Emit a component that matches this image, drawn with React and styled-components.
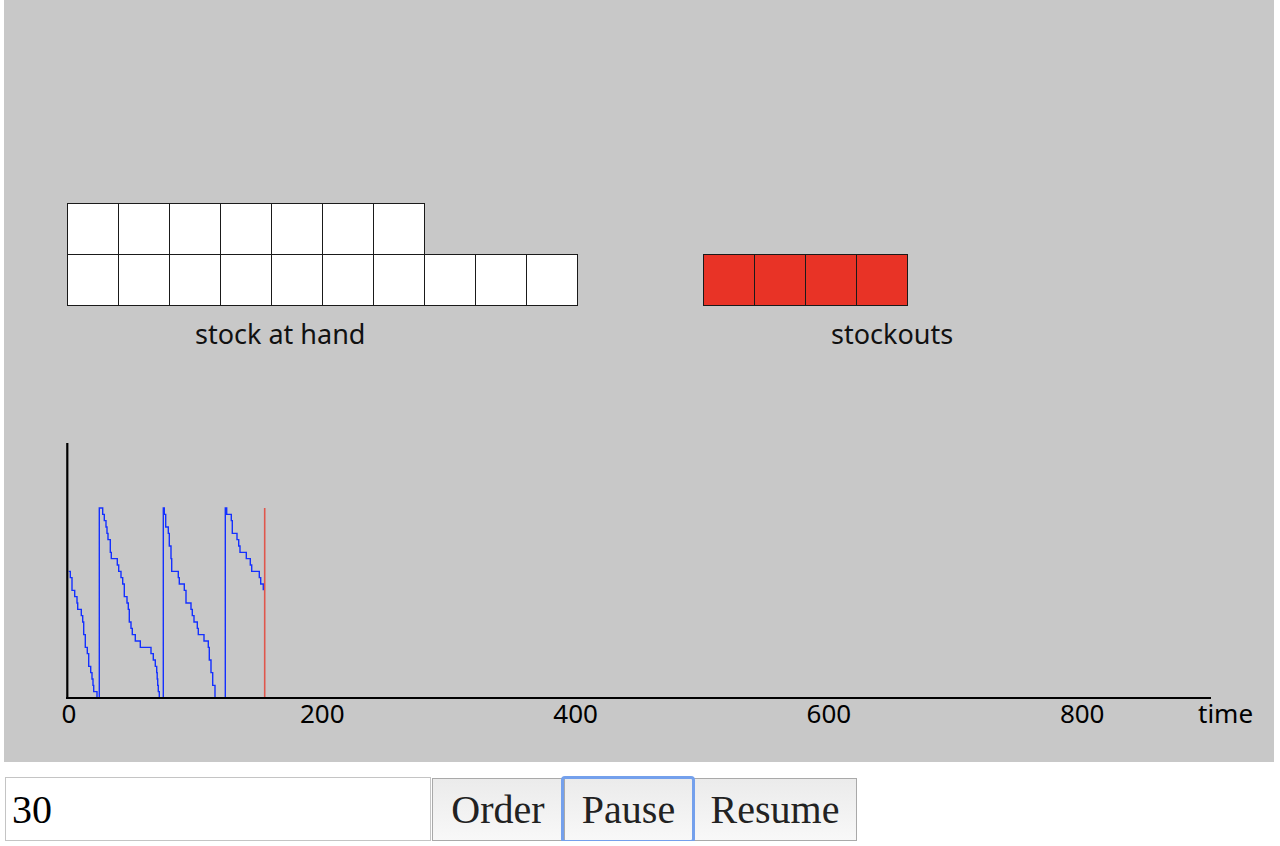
import { createGlobalStyle, styled } from 'styled-components';

const GlobalStyle = createGlobalStyle`
    html, body {
        margin: 0;
        padding: 0;
        background: #ffffff;
    }
    #root {
        padding-left: 4px;
    }
`;

const Panel = styled.div`
    width: 1270px;
    height: 762px;
    background: #c8c8c8;
    display: flex;
    flex-direction: column;
`;

const StockArea = styled.div`
    display: grid;
    grid-template-columns: 636px 636px;
    padding: 203px 0 0 63px;
`;

const StockGroup = styled.div`
    display: flex;
    flex-direction: column;
`;

const Stack = styled.div`
    height: 102px;
    display: flex;
    flex-direction: column;
    justify-content: flex-end;
`;

const SquareRow = styled.div`
    display: flex;
`;

const Square = styled.div`
    box-sizing: border-box;
    width: 52px;
    height: 52px;
    margin: 0 -1px -1px 0;
    border: 1px solid #1a1a1a;
    background: ${(props) => props.color};
`;

const GroupLabel = styled.div`
    margin-top: 11px;
    padding-left: 128px;
    height: 35px;
    line-height: 35px;
    font-family: 'Noto Sans', sans-serif;
    font-size: 27px;
    color: #111111;
`;

const Chart = styled.svg`
    display: block;
    width: 1270px;
    height: 411px;
    font-family: 'Noto Sans', sans-serif;
    font-size: 26px;
`;

const Controls = styled.div`
    display: flex;
    align-items: center;
    margin-top: 15px;
`;

const AmountInput = styled.input`
    box-sizing: border-box;
    width: 426px;
    height: 64px;
    margin: 0 1px 0 1px;
    padding: 0 6px;
    border: 1px solid #c4c4c4;
    font-family: 'Liberation Serif', serif;
    font-size: 40px;
    color: #000000;
    outline: none;
`;

const Button = styled.button`
    position: relative;
    z-index: ${(props) => (props.focused ? 1 : 0)};
    box-sizing: border-box;
    width: ${(props) => props.width}px;
    height: 63px;
    padding: 0;
    border: 1px solid #a9a9a9;
    background: linear-gradient(#ebebeb, #f8f8f8);
    font-family: 'Liberation Serif', serif;
    font-size: 40px;
    color: #222222;
    &::after {
        content: '';
        display: ${(props) => (props.focused ? 'block' : 'none')};
        position: absolute;
        inset: -3px -3px -3px -4px;
        border: 3px solid #74a0ec;
        border-radius: 4px;
    }
`;

const levelY = (level) => 698 - level * (190 / 30);

// [x, level] steps of the stock level over time
const stockSteps = [
    [68.7, 20], [70.3, 19], [72, 17], [74.7, 16], [77, 15], [77.7, 14],
    [81.3, 13], [82.7, 12], [83.7, 10], [85.3, 8], [87.3, 7], [88.7, 5],
    [90.7, 4], [92, 3], [93, 2], [93.7, 1], [97, 0], [99.3, 30],
    [102.7, 29], [104.3, 28], [106, 27], [107, 26], [108, 25], [110.3, 23],
    [111.3, 22], [117.3, 21], [118.7, 20], [121, 19], [122.7, 18], [124.3, 16],
    [127, 15], [128.3, 14], [129.3, 12], [131, 11], [132.3, 10], [135.3, 9],
    [140.3, 8], [151, 7], [153.3, 6], [155.3, 5], [156.7, 4], [157.2, 3],
    [157.7, 2], [158.3, 1], [159.3, 0], [163.3, 30],
    [164.3, 29], [165.7, 27], [168.3, 26], [169.3, 24], [171, 22], [171.7, 20],
    [178.3, 19], [179.3, 18], [184.3, 17], [186, 15], [191, 14], [192.3, 13],
    [194, 12], [197.3, 11], [198.3, 10], [204, 9], [208.3, 8], [209.3, 6],
    [211, 4], [212.7, 2], [215, 0], [225.3, 30],
    [226.7, 29], [231.3, 28], [232.3, 26], [237, 25], [238.7, 24], [240, 23],
    [246.3, 22], [250.3, 21], [251.7, 20], [259.3, 19], [260.7, 18], [263.3, 17],
];

const stockPath = stockSteps
    .map(([x, level], i) =>
        i === 0
            ? `M ${x} ${levelY(level)}`
            : `H ${x} V ${levelY(level)}`
    )
    .join(' ');

const ticks = [0, 200, 400, 600, 800];

function StockStack({ count, color }) {
    // bottom row fills first, ten per row
    const bottom = Math.min(count, 10);
    const top = Math.max(count - 10, 0);
    return (
        <Stack>
            {top > 0 && (
                <SquareRow>
                    {Array.from({ length: top }, (_, i) => (
                        <Square key={i} color={color} />
                    ))}
                </SquareRow>
            )}
            <SquareRow>
                {Array.from({ length: bottom }, (_, i) => (
                    <Square key={i} color={color} />
                ))}
            </SquareRow>
        </Stack>
    );
}

export default function App() {
    return (
        <>
            <GlobalStyle />
            <Panel>
                <StockArea>
                    <StockGroup>
                        <StockStack count={17} color="#ffffff" />
                        <GroupLabel>stock at hand</GroupLabel>
                    </StockGroup>
                    <StockGroup>
                        <StockStack count={4} color="#e83326" />
                        <GroupLabel>stockouts</GroupLabel>
                    </StockGroup>
                </StockArea>
                <Chart viewBox="4 351 1270 411">
                    <path
                        d={stockPath}
                        fill="none"
                        stroke="#1430ff"
                        strokeWidth="1.4"
                    />
                    <line
                        x1="264.7"
                        y1="508"
                        x2="264.7"
                        y2="698"
                        stroke="#e0574c"
                        strokeWidth="1.6"
                    />
                    <line x1="67.3" y1="443" x2="67.3" y2="699" stroke="#000" strokeWidth="2.2" />
                    <line x1="66" y1="698" x2="1211" y2="698" stroke="#000" strokeWidth="2.2" />
                    {ticks.map((t, i) => (
                        <text
                            key={t}
                            x={69 + i * 253.3}
                            y="723"
                            textAnchor="middle"
                            fill="#000"
                        >
                            {t}
                        </text>
                    ))}
                    <text x="1198" y="723" fill="#000">
                        time
                    </text>
                </Chart>
            </Panel>
            <Controls>
                <AmountInput defaultValue="30" />
                <Button width={132}>Order</Button>
                <Button width={129} focused>
                    Pause
                </Button>
                <Button width={164}>Resume</Button>
            </Controls>
        </>
    );
}
